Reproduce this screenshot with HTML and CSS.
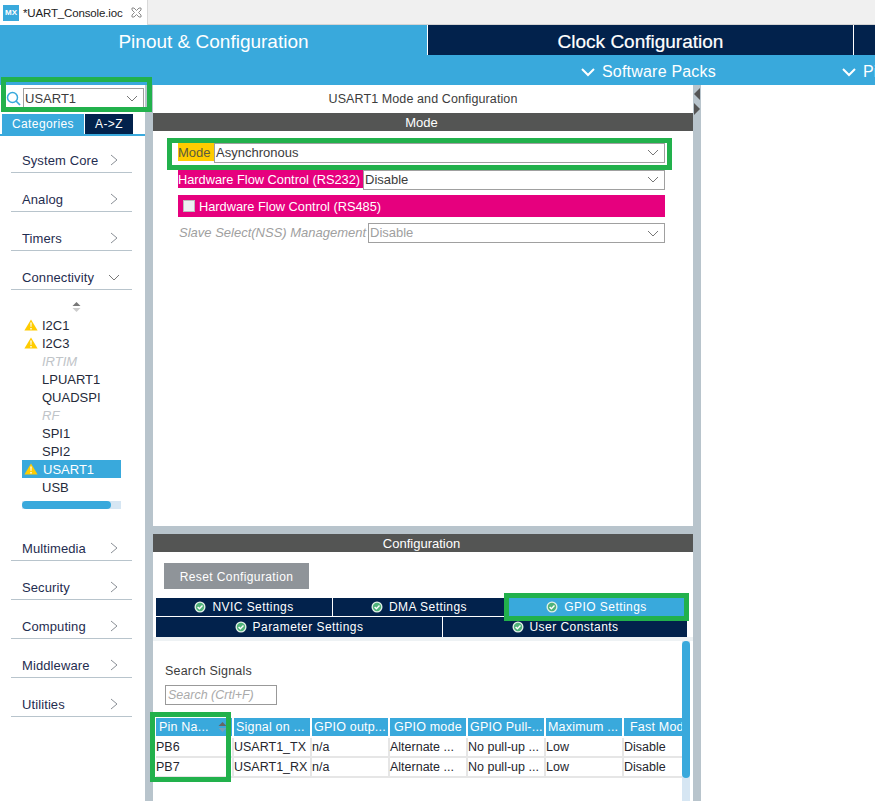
FILE: index.html
```html
<!DOCTYPE html>
<html lang="en">
<head>
    <meta charset="UTF-8">
    <title>UART_Console.ioc</title>
    <link rel="stylesheet" href="styles.css">
</head>
<body>

    <svg class="icon-defs" width="0" height="0">
        <symbol id="warn" viewBox="0 0 14 12">
            <path d="M7 0.5 L13.6 11.5 H0.4 Z" fill="#fc0"/>
            <path d="M6.3 3.5 H7.7 L7.4 8 H6.6 Z M6.3 9 H7.7 V10.4 H6.3 Z" fill="#fff"/>
        </symbol>
        <symbol id="check" viewBox="0 0 12 12">
            <circle cx="6" cy="6" r="5.5" fill="#e4f2e8"/>
            <circle cx="6" cy="6" r="4.2" fill="#4fb37a"/>
            <path d="M3.6 6 L5.4 7.8 L8.5 4.5" fill="none" stroke="#fff" stroke-width="1.4"/>
        </symbol>
        <symbol id="chev-right" viewBox="0 0 8 12">
            <path d="M1 1 L7 6 L1 11" fill="none" stroke="#8a8f96" stroke-width="1"/>
        </symbol>
        <symbol id="chev-down" viewBox="0 0 12 8">
            <path d="M1 1 L6 6 L11 1" fill="none" stroke="#777" stroke-width="1"/>
        </symbol>
    </svg>

    <div class="editor-tabs">
        <div class="editor-tab">
            <span class="mx-logo">MX</span>
            <span class="editor-name">*UART_Console.ioc</span>
            <svg class="close-icon" width="11" height="11" viewBox="0 0 11 11">
                <path d="M1 1 H3 L5.5 3.5 L8 1 H10 V3 L7.5 5.5 L10 8 V10 H8 L5.5 7.5 L3 10 H1 V8 L3.5 5.5 L1 3 Z" fill="none" stroke="#8a8a8a" stroke-width="1"/>
            </svg>
        </div>
    </div>

    <div class="top-tabs">
        <div class="top-tab active">Pinout &amp; Configuration</div>
        <div class="top-tab">Clock Configuration</div>
        <div class="top-tab"></div>
    </div>

    <div class="sub-bar">
        <svg class="sub-chev first" width="14" height="9" viewBox="0 0 14 9"><path d="M1 1 L7 7 L13 1" fill="none" stroke="#fff" stroke-width="2"/></svg>
        <span class="sub-label">Software Packs</span>
        <svg class="sub-chev second" width="14" height="9" viewBox="0 0 14 9"><path d="M1 1 L7 7 L13 1" fill="none" stroke="#fff" stroke-width="2"/></svg>
        <span class="sub-label">Pinout</span>
    </div>

    <div class="workspace">

        <!-- Colonne de gauche -->
        <aside class="sidebar">
            <div class="search-row">
                <svg width="15" height="15" viewBox="0 0 15 15">
                    <circle cx="6.5" cy="6.5" r="5" fill="none" stroke="#39a9dc" stroke-width="1.5"/>
                    <path d="M10 10 L14 14" stroke="#39a9dc" stroke-width="1.7"/>
                </svg>
                <div class="combo search-combo">
                    <span>USART1</span>
                    <svg width="12" height="8"><use href="#chev-down"/></svg>
                </div>
            </div>
            <div class="side-tabs">
                <span class="side-tab active">Categories</span>
                <span class="side-tab">A-&gt;Z</span>
            </div>
            <div class="cat-list">
                <div class="cat"><span>System Core</span><svg width="8" height="12"><use href="#chev-right"/></svg></div>
                <div class="cat"><span>Analog</span><svg width="8" height="12"><use href="#chev-right"/></svg></div>
                <div class="cat"><span>Timers</span><svg width="8" height="12"><use href="#chev-right"/></svg></div>
                <div class="cat"><span>Connectivity</span><svg class="cat-open" width="12" height="8"><use href="#chev-down"/></svg></div>
                <div class="cat-panel">
                    <svg class="sort-icon" width="9" height="10" viewBox="0 0 9 10">
                        <path d="M4.5 0 L8.5 4 H0.5 Z" fill="#777"/>
                        <path d="M4.5 10 L8.5 6 H0.5 Z" fill="#ccc"/>
                    </svg>
                    <ul class="ip-list">
                        <li><svg width="14" height="12"><use href="#warn"/></svg>I2C1</li>
                        <li><svg width="14" height="12"><use href="#warn"/></svg>I2C3</li>
                        <li class="off">IRTIM</li>
                        <li>LPUART1</li>
                        <li>QUADSPI</li>
                        <li class="off">RF</li>
                        <li>SPI1</li>
                        <li>SPI2</li>
                        <li class="selected"><svg width="14" height="12"><use href="#warn"/></svg>USART1</li>
                        <li>USB</li>
                    </ul>
                    <div class="h-scroll"><div class="h-thumb"></div></div>
                </div>
                <div class="cat"><span>Multimedia</span><svg width="8" height="12"><use href="#chev-right"/></svg></div>
                <div class="cat"><span>Security</span><svg width="8" height="12"><use href="#chev-right"/></svg></div>
                <div class="cat"><span>Computing</span><svg width="8" height="12"><use href="#chev-right"/></svg></div>
                <div class="cat"><span>Middleware</span><svg width="8" height="12"><use href="#chev-right"/></svg></div>
                <div class="cat"><span>Utilities</span><svg width="8" height="12"><use href="#chev-right"/></svg></div>
            </div>
        </aside>

        <!-- Panneau central -->
        <main class="center">
            <section class="mode-panel">
                <div class="panel-title">USART1 Mode and Configuration</div>
                <div class="section-bar">Mode</div>
                <div class="mode-form">
                    <div class="form-row">
                        <span class="label-mode">Mode</span>
                        <div class="combo fill"><span>Asynchronous</span><svg width="12" height="8"><use href="#chev-down"/></svg></div>
                    </div>
                    <div class="form-row">
                        <span class="label-pink">Hardware Flow Control (RS232)</span>
                        <div class="combo fill"><span>Disable</span><svg width="12" height="8"><use href="#chev-down"/></svg></div>
                    </div>
                    <div class="check-row">
                        <span class="checkbox"></span>
                        <span>Hardware Flow Control (RS485)</span>
                    </div>
                    <div class="form-row disabled">
                        <span class="label-off">Slave Select(NSS) Management</span>
                        <div class="combo fill"><span>Disable</span><svg width="12" height="8"><use href="#chev-down"/></svg></div>
                    </div>
                </div>
            </section>

            <section class="config-panel">
                <div class="section-bar">Configuration</div>
                <button class="reset-btn">Reset Configuration</button>
                <div class="config-tabs">
                    <div class="tab-line line-one">
                        <div class="cfg-tab"><svg width="12" height="12"><use href="#check"/></svg>NVIC Settings</div>
                        <div class="cfg-tab"><svg width="12" height="12"><use href="#check"/></svg>DMA Settings</div>
                        <div class="cfg-tab current"><svg width="12" height="12"><use href="#check"/></svg>GPIO Settings</div>
                    </div>
                    <div class="tab-line line-two">
                        <div class="cfg-tab"><svg width="12" height="12"><use href="#check"/></svg>Parameter Settings</div>
                        <div class="cfg-tab"><svg width="12" height="12"><use href="#check"/></svg>User Constants</div>
                    </div>
                </div>
                <div class="signals">
                    <div class="signals-main">
                        <div class="search-title">Search Signals</div>
                        <div class="search-input">Search (Crtl+F)</div>
                        <div class="sig-table">
                            <div class="th pin-head">Pin Na...<svg width="9" height="10" viewBox="0 0 9 10"><path d="M4.5 0 L8.5 4 H0.5 Z" fill="#666"/><path d="M4.5 10 L8.5 6 H0.5 Z" fill="#7a9fb8"/></svg></div>
                            <div class="th">Signal on ...</div>
                            <div class="th">GPIO outp...</div>
                            <div class="th mode-head">GPIO mode</div>
                            <div class="th">GPIO Pull-...</div>
                            <div class="th">Maximum ...</div>
                            <div class="th center-text">Fast Mode</div>

                            <div class="td">PB6</div>
                            <div class="td">USART1_TX</div>
                            <div class="td">n/a</div>
                            <div class="td">Alternate ...</div>
                            <div class="td">No pull-up ...</div>
                            <div class="td">Low</div>
                            <div class="td">Disable</div>

                            <div class="td">PB7</div>
                            <div class="td">USART1_RX</div>
                            <div class="td">n/a</div>
                            <div class="td">Alternate ...</div>
                            <div class="td">No pull-up ...</div>
                            <div class="td">Low</div>
                            <div class="td">Disable</div>
                        </div>
                    </div>
                    <div class="v-scroll"><div class="v-thumb"></div></div>
                </div>
            </section>
        </main>

        <div class="split-gutter">
            <svg width="8" height="32" viewBox="0 0 8 32">
                <path d="M7 3 V15 L1 9 Z" fill="#555"/>
                <path d="M1 18 V30 L7 24 Z" fill="#555"/>
            </svg>
        </div>
        <div class="right-pane"></div>

        <!-- Cadres verts d'annotation -->
        <div class="mark mark-search"></div>
        <div class="mark mark-mode"></div>
        <div class="mark mark-pin"></div>
    </div>

</body>
</html>
```

FILE: styles.css
```css
* {
    box-sizing: border-box;
}
html, body {
    margin: 0;
    height: 100%;
}
body {
    width: 875px;
    height: 801px;
    overflow: hidden;
    background-color: #fff;
    font-family: "Liberation Sans", Arial, sans-serif;
    font-size: 13px;
    color: #3c3c3c;
}
.icon-defs {
    position: absolute;
}

/* onglet de l'editeur */
.editor-tabs {
    height: 25px;
    background-color: #f0f0f0;
    border-bottom: 1px solid #d4d4d4;
}
.editor-tab {
    width: 148px;
    height: 25px;
    background-color: #fff;
    border-right: 1px solid #d9d9d9;
    display: flex;
    align-items: center;
    padding-left: 3px;
}
.mx-logo {
    width: 16px;
    height: 16px;
    background-color: #39a9dc;
    color: #fff;
    font-size: 8px;
    font-weight: bold;
    line-height: 16px;
    text-align: center;
}
.editor-name {
    margin-left: 4px;
    font-size: 11.5px;
    letter-spacing: -0.15px;
    color: #222;
}
.close-icon {
    margin-left: 8px;
}

/* onglets principaux */
.top-tabs {
    height: 30px;
    display: grid;
    grid-template-columns: 427px 425px 1fr;
    column-gap: 1px;
    background-color: #fff;
}
.top-tab {
    background-color: #02224c;
    color: #fff;
    font-size: 19px;
    line-height: 33px;
    text-align: center;
    -webkit-text-stroke: 0.2px #fff;
    overflow: hidden;
}
.top-tab.active {
    background-color: #39a9dc;
    -webkit-text-stroke: 0;
}
.sub-bar {
    height: 30px;
    padding-top: 4px;
    background-color: #39a9dc;
    display: flex;
    align-items: center;
    white-space: nowrap;
    overflow: hidden;
}
.sub-chev {
    flex-shrink: 0;
}
.sub-chev.first {
    margin-left: 581px;
}
.sub-chev.second {
    margin-left: 126px;
}
.sub-label {
    margin-left: 7px;
    color: #fff;
    font-size: 16px;
    letter-spacing: 0.2px;
}

/* zone de travail */
.workspace {
    position: relative;
    height: 716px;
    display: grid;
    grid-template-columns: 145px 548px 8px 1fr;
}
.sidebar {
    background-color: #fff;
}
.search-row {
    height: 24px;
    margin-top: 1px;
    padding-left: 6px;
    display: flex;
    align-items: center;
    gap: 2px;
}
.combo {
    height: 20px;
    border: 1px solid #a0a0a0;
    background-color: #fff;
    display: flex;
    align-items: center;
    justify-content: space-between;
    padding: 0 5px 2px 1px;
    color: #3c3c3c;
    font-size: 13px;
}
.combo svg {
    margin-top: 2px;
}
.search-combo {
    width: 121px;
    height: 21px;
    padding-bottom: 0;
}
.side-tabs {
    height: 26px;
    padding: 4px 0 0 2px;
    display: flex;
    gap: 1px;
    border-bottom: 2px solid #39a9dc;
}
.side-tab {
    width: 48px;
    background-color: #02224c;
    color: #fff;
    font-size: 12px;
    letter-spacing: 0.4px;
    line-height: 20px;
    text-align: center;
}
.side-tab.active {
    width: 82px;
    background-color: #39a9dc;
}
.cat-list {
    display: flex;
    flex-direction: column;
    gap: 2px;
    padding-right: 13px;
}
.cat {
    height: 37px;
    margin-left: 11px;
    padding: 0 14px 4px 11px;
    border-bottom: 1px solid #b8c4cc;
    display: flex;
    align-items: flex-end;
    justify-content: space-between;
    color: #1f2d50;
    font-size: 13px;
    letter-spacing: 0.1px;
    line-height: 15px;
}
.cat svg {
    margin-bottom: 2px;
}
.cat svg.cat-open {
    margin-bottom: 3px;
    margin-right: -2px;
}
.cat-panel {
    height: 230px;
    padding: 10px 11px 0 22px;
    display: flex;
    flex-direction: column;
}
.sort-icon {
    align-self: center;
    margin: 0 0 4px 9px;
}
.ip-list {
    list-style: none;
    margin: 0;
    padding: 0;
}
.ip-list li {
    height: 18px;
    padding-left: 20px;
    position: relative;
    line-height: 19px;
    font-size: 13px;
    color: #252a3a;
}
.ip-list li svg {
    position: absolute;
    left: 2px;
    top: 3px;
}
.ip-list li.off {
    color: #c0c4c8;
    font-style: italic;
}
.ip-list li.selected {
    background-color: #39a9dc;
    color: #fff;
    padding-left: 21px;
}
.h-scroll {
    height: 8px;
    margin-top: 5px;
    background-color: #d6e6f3;
}
.h-thumb {
    width: 89px;
    height: 8px;
    border-radius: 4px;
    background-color: #39a9dc;
}

/* panneau central */
.center {
    background-color: #b8c4cc;
    padding: 0 0 0 8px;
    display: flex;
    flex-direction: column;
    gap: 8px;
}
.mode-panel {
    height: 441px;
    background-color: #fff;
}
.panel-title {
    height: 28px;
    line-height: 29px;
    text-align: center;
    font-size: 12.5px;
    letter-spacing: 0.1px;
}
.section-bar {
    height: 18px;
    padding-right: 3px;
    background-color: #545554;
    color: #fff;
    font-size: 13px;
    line-height: 19px;
    text-align: center;
}
.mode-form {
    width: 487px;
    margin-left: 25px;
    padding-top: 12px;
}
.form-row {
    height: 20px;
    display: flex;
    align-items: flex-start;
    margin-bottom: 7px;
}
.fill {
    flex: 1;
}
.label-mode {
    width: 36px;
    height: 18px;
    background-color: #fc0;
    color: #5c5c3c;
    line-height: 19px;
}
.label-pink {
    height: 18px;
    width: 185px;
    background-color: #e6007e;
    color: #fff;
    font-size: 12.8px;
    line-height: 19px;
    white-space: nowrap;
}
.check-row {
    height: 22px;
    margin: -2px 0 6px;
    background-color: #e6007e;
    color: #fff;
    font-size: 12.8px;
    display: flex;
    align-items: center;
    padding-left: 5px;
    gap: 4px;
}
.checkbox {
    width: 12px;
    height: 12px;
    background-color: #eef0f2;
    border: 1px solid #bbb;
}
.label-off {
    width: 190px;
    padding-left: 1px;
    color: #a0a0a0;
    font-style: italic;
    font-size: 13px;
    line-height: 20px;
    white-space: nowrap;
}
.disabled .combo {
    padding-bottom: 1px;
    color: #a0a0a0;
    border-color: #a0a0a0;
}

/* configuration */
.config-panel {
    flex: 1;
    background-color: #fff;
    display: flex;
    flex-direction: column;
    min-height: 0;
}
.reset-btn {
    width: 145px;
    height: 26px;
    margin: 11px 0 0 11px;
    padding: 1px 0 0;
    border: 0;
    background-color: #8f9499;
    color: #fff;
    font-family: inherit;
    font-size: 12px;
    letter-spacing: 0.4px;
}
.config-tabs {
    width: 531px;
    margin: 9px 0 0 3px;
    display: flex;
    flex-direction: column;
    gap: 1px;
}
.tab-line {
    display: grid;
    column-gap: 1px;
}
.line-one {
    height: 18px;
    grid-template-columns: 176px 172px 1fr;
}
.line-two {
    height: 20px;
    grid-template-columns: 286px 1fr;
}
.cfg-tab {
    background-color: #02224c;
    color: #fff;
    font-size: 12px;
    letter-spacing: 0.45px;
    display: flex;
    align-items: center;
    justify-content: center;
    gap: 6px;
}
.cfg-tab.current {
    background-color: #39a9dc;
    outline: 5px solid #22b14c;
    margin-left: 3px;
    margin-right: 3px;
    position: relative;
}
.signals {
    flex: 1;
    min-height: 0;
    border-top: 4px solid #eef2f4;
    display: grid;
    grid-template-columns: 529px 8px;
}
.signals-main {
    overflow: hidden;
    padding-top: 22px;
}
.search-title {
    margin-left: 12px;
    font-size: 12.5px;
    letter-spacing: 0.2px;
    line-height: 16px;
}
.search-input {
    width: 112px;
    height: 20px;
    margin: 6px 0 0 12px;
    border: 1px solid #999;
    color: #aaa;
    font-style: italic;
    font-size: 12.5px;
    line-height: 19px;
    padding-left: 2px;
}
.sig-table {
    width: 540px;
    margin: 13px 0 0 3px;
    display: grid;
    grid-template-columns: repeat(7, 78px);
    grid-auto-rows: 20px;
}
.th {
    height: 18px;
    margin-right: 2px;
    background-color: #39a9dc;
    color: #fff;
    font-size: 12.5px;
    letter-spacing: 0.2px;
    line-height: 19px;
    padding-left: 2px;
    white-space: nowrap;
    overflow: hidden;
}
.pin-head {
    display: flex;
    align-items: center;
    justify-content: space-between;
    padding: 0 5px 0 3px;
}
.mode-head {
    padding-left: 4px;
}
.center-text {
    padding-left: 6px;
}
.td {
    border-bottom: 2px solid #e6e6e6;
    border-right: 2px solid #e6e6e6;
    color: #26262e;
    font-size: 12.5px;
    line-height: 18px;
    white-space: nowrap;
}
.v-scroll {
    background-color: #d6e6f3;
}
.v-thumb {
    height: 137px;
    border-radius: 4px;
    background-color: #39a9dc;
}

.split-gutter {
    background-color: #b8c4cc;
}
.split-gutter svg {
    display: block;
}
.right-pane {
    background-color: #fff;
}

/* cadres d'annotation */
.mark {
    position: absolute;
    border: 5px solid #22b14c;
    pointer-events: none;
}
.mark-search {
    left: 1px;
    top: -8px;
    width: 151px;
    height: 35px;
}
.mark-mode {
    left: 167px;
    top: 53px;
    width: 505px;
    height: 32px;
}
.mark-pin {
    left: 150px;
    top: 627px;
    width: 81px;
    height: 70px;
}
```
